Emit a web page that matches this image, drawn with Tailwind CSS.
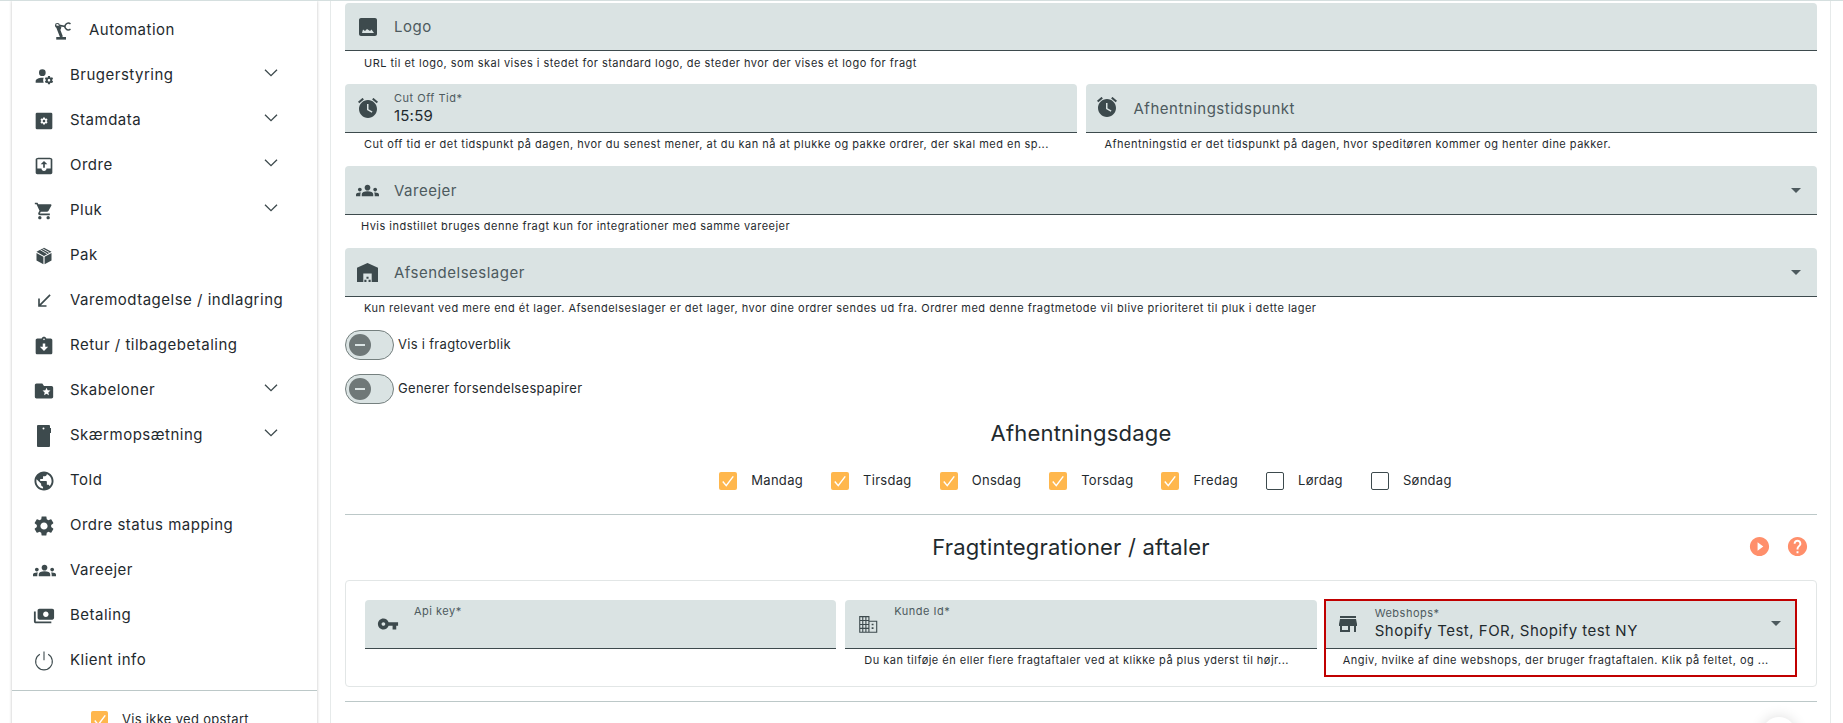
<!DOCTYPE html>
<html lang="en">

<head>
    <meta charset="UTF-8">
    <meta name="viewport" content="width=device-width, initial-scale=1.0">
    <title>Fragt</title>
    <script src="https://cdn.jsdelivr.net/npm/@tailwindcss/browser@4"></script>
</head>

<body class="h-[723px] overflow-hidden bg-white font-['Inter',sans-serif] text-[#1f2a2e]">

    <div class="h-[723px] border-t border-[#d5dfdf] flex overflow-hidden">

        <!-- Sidebar -->
        <aside class="w-[305px] ml-3 shrink-0 h-[760px] shadow-[0_0_3px_rgba(0,0,0,0.25)] text-[15px] tracking-[0.5px]">
            <div class="pt-[7px] text-[#1f2a2e]">
                <a class="h-[45px] flex items-center pl-[42px] gap-[17px]">
                    <svg class="w-[18px] h-[18px] fill-[#3d4a4d] stroke-[#3d4a4d]" viewBox="0 0 24 24"><rect x="3" y="20" width="13" height="3.500" stroke="none"/><path d="M10 20 5 7 9.500 8" stroke-width="4" fill="none"/><circle cx="4.500" cy="4.500" r="2.500" stroke-width="1.500" fill="none"/><path d="M7 4.500 15 6" stroke-width="2.200"/><path d="M22 2.500A4.500 4.500 0 1 0 22 9.500" fill="none" stroke-width="2"/></svg>
                    <span>Automation</span>
                </a>
                <a class="h-[45px] flex items-center pl-[22px] gap-[16px]">
                    <svg class="w-[20px] h-[20px] fill-[#3d4a4d]" viewBox="0 0 24 24"><path d="M10 4A4 4 0 0 0 6 8A4 4 0 0 0 10 12A4 4 0 0 0 14 8A4 4 0 0 0 10 4M17 12C16.87 12 16.76 12.09 16.74 12.21L16.55 13.53C16.25 13.66 15.96 13.82 15.7 14L14.46 13.5C14.35 13.5 14.22 13.5 14.15 13.63L13.15 15.36C13.09 15.47 13.11 15.6 13.21 15.68L14.27 16.5C14.25 16.67 14.24 16.83 14.24 17C14.24 17.17 14.25 17.33 14.27 17.5L13.21 18.32C13.12 18.4 13.09 18.53 13.15 18.64L14.15 20.37C14.21 20.5 14.34 20.5 14.46 20.5L15.7 20C15.96 20.18 16.24 20.35 16.55 20.47L16.74 21.79C16.76 21.91 16.86 22 17 22H19C19.11 22 19.22 21.91 19.24 21.79L19.43 20.47C19.73 20.34 20 20.18 20.27 20L21.5 20.5C21.63 20.5 21.76 20.5 21.83 20.37L22.83 18.64C22.89 18.53 22.86 18.4 22.77 18.32L21.7 17.5C21.72 17.33 21.74 17.17 21.74 17C21.74 16.83 21.73 16.67 21.7 16.5L22.76 15.68C22.85 15.6 22.88 15.47 22.82 15.36L21.82 13.63C21.76 13.5 21.63 13.5 21.5 13.5L20.27 14C20 13.82 19.73 13.65 19.42 13.53L19.23 12.21C19.22 12.09 19.11 12 19 12H17M10 14C5.58 14 2 15.79 2 18V20H11.68A7 7 0 0 1 11 17A7 7 0 0 1 11.64 14.09C11.11 14.03 10.56 14 10 14M18 15.5C18.83 15.5 19.5 16.17 19.5 17C19.5 17.83 18.83 18.5 18 18.5C17.16 18.5 16.5 17.83 16.5 17C16.5 16.17 17.17 15.5 18 15.5Z"/></svg>
                    <span class="flex-1">Brugerstyring</span>
                    <svg class="w-[16px] h-[16px] mr-[38px] -mt-[6px] fill-none stroke-[#3d4a4d] stroke-[2]" viewBox="0 0 24 24"><path d="M3 7l9 9 9-9"/></svg>
                </a>
                <a class="h-[45px] flex items-center pl-[22px] gap-[16px]">
                    <svg class="w-[20px] h-[20px]" viewBox="0 0 24 24"><rect x="2" y="2" width="20" height="20" rx="1.500" fill="#3d4a4d"/><path fill="#fff" transform="translate(6.600 6.600) scale(.45)" d="M19.14 12.94c.04-.3.06-.61.06-.94 0-.32-.02-.64-.07-.94l2.03-1.58c.18-.14.23-.41.12-.61l-1.92-3.32c-.12-.22-.37-.29-.59-.22l-2.39.96c-.5-.38-1.03-.7-1.62-.94l-.36-2.54c-.04-.24-.24-.41-.48-.41h-3.84c-.24 0-.43.17-.47.41l-.36 2.54c-.59.24-1.13.57-1.62.94l-2.39-.96c-.22-.08-.47 0-.59.22L2.74 8.87c-.12.21-.08.47.12.61l2.03 1.58c-.05.3-.09.63-.09.94s.02.64.07.94l-2.03 1.58c-.18.14-.23.41-.12.61l1.92 3.32c.12.22.37.29.59.22l2.39-.96c.5.38 1.03.7 1.62.94l.36 2.54c.05.24.24.41.48.41h3.84c.24 0 .44-.17.47-.41l.36-2.54c.59-.24 1.13-.56 1.62-.94l2.39.96c.22.08.47 0 .59-.22l1.92-3.32c.12-.22.07-.47-.12-.61l-2.01-1.58zM12 15.6c-1.98 0-3.6-1.62-3.6-3.6s1.62-3.6 3.6-3.6 3.6 1.62 3.6 3.6-1.62 3.6-3.6 3.6z"/></svg>
                    <span class="flex-1">Stamdata</span>
                    <svg class="w-[16px] h-[16px] mr-[38px] -mt-[6px] fill-none stroke-[#3d4a4d] stroke-[2]" viewBox="0 0 24 24"><path d="M3 7l9 9 9-9"/></svg>
                </a>
                <a class="h-[45px] flex items-center pl-[22px] gap-[16px]">
                    <svg class="w-[20px] h-[20px] fill-[#3d4a4d]" viewBox="0 0 24 24"><path d="M19 2H5c-1.100 0-3 .9-3 2v16c0 1.100 1.900 2 3 2h14c1.100 0 3-.9 3-2V4c0-1.100-1.900-2-3-2zm0 13h-4c0 1.660-1.350 3-3 3s-3-1.340-3-3H4V4h16v11zm-11-5h3v4h2v-4h3l-4-4-4 4z"/></svg>
                    <span class="flex-1">Ordre</span>
                    <svg class="w-[16px] h-[16px] mr-[38px] -mt-[6px] fill-none stroke-[#3d4a4d] stroke-[2]" viewBox="0 0 24 24"><path d="M3 7l9 9 9-9"/></svg>
                </a>
                <a class="h-[45px] flex items-center pl-[22px] gap-[16px]">
                    <svg class="w-[20px] h-[20px] fill-[#3d4a4d]" viewBox="0 0 24 24"><path d="M7 18c-1.100 0-1.990.9-1.990 2S5.900 22 7 22s2-.9 2-2-.9-2-2-2zM1 2v2h2l3.600 7.590-1.350 2.450c-.16.28-.25.61-.25.96 0 1.100.9 2 2 2h12v-2H7.420c-.14 0-.25-.11-.25-.25l.03-.12.9-1.630h7.450c.75 0 1.410-.41 1.750-1.030l3.580-6.490c.08-.14.12-.31.12-.48 0-.55-.45-1-1-1H5.210l-.94-2H1zm16 16c-1.100 0-1.990.9-1.990 2s.89 2 1.990 2 2-.9 2-2-.9-2-2-2z"/></svg>
                    <span class="flex-1">Pluk</span>
                    <svg class="w-[16px] h-[16px] mr-[38px] -mt-[6px] fill-none stroke-[#3d4a4d] stroke-[2]" viewBox="0 0 24 24"><path d="M3 7l9 9 9-9"/></svg>
                </a>
                <a class="h-[45px] flex items-center pl-[22px] gap-[16px]">
                    <svg class="w-[20px] h-[20px] fill-[#3d4a4d]" viewBox="0 0 24 24"><path d="M12 2 21 7 12 12 3 7zM3 8.500 11.300 13V22L3 17.500zM12.700 13 21 8.500V17.500L12.700 22z"/><path d="M7.500 4.500 16 9.500M10 3.200 18.500 8" stroke="#fff" stroke-width="1"/></svg>
                    <span>Pak</span>
                </a>
                <a class="h-[45px] flex items-center pl-[22px] gap-[16px]">
                    <svg class="w-[20px] h-[20px] fill-[#3d4a4d]" viewBox="0 0 24 24"><path d="M20 5.410 18.590 4 7 15.590V9H5v10h10v-2H8.410z"/></svg>
                    <span>Varemodtagelse / indlagring</span>
                </a>
                <a class="h-[45px] flex items-center pl-[22px] gap-[16px]">
                    <svg class="w-[20px] h-[20px] fill-[#3d4a4d]" viewBox="0 0 24 24"><path d="M20 3h-5.180C14.400 1.840 13.300 1 12 1c-1.300 0-2.400.84-2.820 2H4c-1.100 0-2 .9-2 2v15c0 1.100.9 2 2 2h16c1.100 0 2-.9 2-2V5c0-1.100-.9-2-2-2zm-8 0c.55 0 1 .45 1 1s-.45 1-1 1-1-.45-1-1 .45-1 1-1zm0 15l-5-5h3.500V9h3v4H17l-5 5z"/></svg>
                    <span>Retur / tilbagebetaling</span>
                </a>
                <a class="h-[45px] flex items-center pl-[22px] gap-[16px]">
                    <svg class="w-[20px] h-[20px] fill-[#3d4a4d]" viewBox="0 0 24 24"><path d="M21 6h-9l-2-3H3c-1.100 0-2 .9-2 2v14c0 1.100.9 2 2 2h18c1.100 0 2-.9 2-2V8c0-1.100-.9-2-2-2zm-3.060 11L15 15.280 12.060 17l.78-3.330-2.590-2.240 3.410-.29L15 8l1.340 3.140 3.410.29-2.590 2.240.78 3.330z"/></svg>
                    <span class="flex-1">Skabeloner</span>
                    <svg class="w-[16px] h-[16px] mr-[38px] -mt-[6px] fill-none stroke-[#3d4a4d] stroke-[2]" viewBox="0 0 24 24"><path d="M3 7l9 9 9-9"/></svg>
                </a>
                <a class="h-[45px] flex items-center pl-[22px] gap-[16px]">
                    <svg class="w-[20px] h-[22px] fill-[#3d4a4d]" viewBox="0 0 20 22"><rect x="3" y="0" width="13" height="22" rx="1"/><rect x="16" y="3" width="1" height="5"/><circle cx="9.500" cy="3.500" r="1" fill="#fff"/></svg>
                    <span class="flex-1">Skærmopsætning</span>
                    <svg class="w-[16px] h-[16px] mr-[38px] -mt-[6px] fill-none stroke-[#3d4a4d] stroke-[2]" viewBox="0 0 24 24"><path d="M3 7l9 9 9-9"/></svg>
                </a>
                <a class="h-[45px] flex items-center pl-[22px] gap-[16px]">
                    <svg class="w-[20px] h-[20px] fill-[#3d4a4d]" viewBox="1.500 1.500 21 21"><path d="M12 2C6.480 2 2 6.480 2 12s4.480 10 10 10 10-4.480 10-10S17.520 2 12 2zm-1 17.930c-3.950-.49-7-3.850-7-7.930 0-.62.08-1.210.21-1.790L9 15v1c0 1.100.9 2 2 2v1.930zm6.900-2.540c-.26-.81-1-1.390-1.900-1.390h-1v-3c0-.55-.45-1-1-1H8v-2h2c.55 0 1-.45 1-1V7h2c1.100 0 2-.9 2-2v-.41c2.930 1.190 5 4.060 5 7.410 0 2.080-.8 3.970-2.100 5.390z"/></svg>
                    <span>Told</span>
                </a>
                <a class="h-[45px] flex items-center pl-[22px] gap-[16px]">
                    <svg class="w-[20px] h-[20px] fill-[#3d4a4d]" viewBox="2 2 20 20"><path d="M19.140 12.940c.04-.3.06-.61.06-.94 0-.32-.02-.64-.07-.94l2.030-1.580c.18-.14.23-.41.12-.61l-1.920-3.320c-.12-.22-.37-.29-.59-.22l-2.390.96c-.5-.38-1.030-.7-1.620-.94l-.36-2.540c-.04-.24-.24-.41-.48-.41h-3.840c-.24 0-.43.17-.47.41l-.36 2.540c-.59.24-1.130.57-1.620.94l-2.390-.96c-.22-.08-.47 0-.59.22L2.740 8.870c-.12.21-.08.47.12.61l2.030 1.580c-.05.3-.09.63-.09.94s.02.64.07.94l-2.030 1.580c-.18.14-.23.41-.12.61l1.920 3.320c.12.22.37.29.59.22l2.390-.96c.5.38 1.030.7 1.620.94l.36 2.540c.05.24.24.41.48.41h3.840c.24 0 .44-.17.47-.41l.36-2.540c.59-.24 1.130-.56 1.620-.94l2.390.96c.22.08.47 0 .59-.22l1.920-3.320c.12-.22.07-.47-.12-.61l-2.010-1.580zM12 15.600c-1.980 0-3.600-1.620-3.600-3.600s1.620-3.600 3.600-3.600 3.600 1.620 3.600 3.600-1.620 3.600-3.600 3.600z"/></svg>
                    <span>Ordre status mapping</span>
                </a>
                <a class="h-[45px] flex items-center pl-[22px] gap-[16px]">
                    <svg class="w-[23px] h-[23px] -mx-[1.500px] fill-[#3d4a4d]" viewBox="0 0 24 24"><path d="M12 12.750c1.630 0 3.070.39 4.240.9 1.080.48 1.760 1.560 1.760 2.730V18H6v-1.610c0-1.180.68-2.260 1.760-2.730 1.170-.52 2.610-.91 4.240-.91zM4 13c1.100 0 2-.9 2-2s-.9-2-2-2-2 .9-2 2 .9 2 2 2zm1.130 1.100c-.37-.06-.74-.1-1.130-.1-.99 0-1.930.21-2.780.58C.48 14.900 0 15.620 0 16.430V18h4.500v-1.610c0-.83.23-1.610.63-2.290zM20 13c1.100 0 2-.9 2-2s-.9-2-2-2-2 .9-2 2 .9 2 2 2zm4 3.430c0-.81-.48-1.530-1.220-1.850-.85-.37-1.790-.58-2.780-.58-.39 0-.76.04-1.130.1.4.68.63 1.460.63 2.290V18H24v-1.570zM12 6c1.660 0 3 1.340 3 3s-1.340 3-3 3-3-1.340-3-3 1.340-3 3-3z"/></svg>
                    <span>Vareejer</span>
                </a>
                <a class="h-[45px] flex items-center pl-[22px] gap-[16px]">
                    <svg class="w-[22px] h-[22px] -mx-[1px] fill-[#3d4a4d] -scale-x-100" viewBox="0 0 24 24"><path d="M19 14V6c0-1.100-.9-2-2-2H3c-1.100 0-2 .9-2 2v8c0 1.100.9 2 2 2h14c1.100 0 2-.9 2-2zm-9-1c-1.660 0-3-1.340-3-3s1.340-3 3-3 3 1.340 3 3-1.340 3-3 3zm13-6v11c0 1.100-.9 2-2 2H4v-2h17V7h2z"/></svg>
                    <span>Betaling</span>
                </a>
                <a class="h-[45px] flex items-center pl-[22px] gap-[16px]">
                    <svg class="w-[20px] h-[20px] fill-none stroke-[#3d4a4d] stroke-[1.300]" viewBox="0 0 24 24"><path d="M7 4A10 10 0 1 0 17 4M12 0.500V11"/></svg>
                    <span>Klient info</span>
                </a>
            </div>
            <div class="mt-[7px] border-t border-[#bcc8c8] pt-[20px] pl-[79px] flex items-start gap-[14px] text-[13px] tracking-[0.3px]">
                <span class="w-[17px] h-[17px] rounded-[2px] bg-[#ffb74d] flex items-center justify-center">
                    <svg class="w-[14px] h-[14px] fill-none stroke-white stroke-[2.500]" viewBox="0 0 24 24"><path d="M3 13l6 7L21 4"/></svg>
                </span>
                <span class="-mt-[1px]">Vis ikke ved opstart</span>
            </div>
        </aside>

        <!-- Main form -->
        <main class="relative ml-[13px] w-[1501px] h-[760px] shrink-0 border-x border-[#e6eaea] pl-[14px] pr-[13px] pt-[2px]">

            <div class="h-[48px] bg-[#dae3e3] rounded-t-[4px] border-b border-[#3d4a4d] flex items-center pl-[14px] gap-[17px]">
                <svg class="w-[18px] h-[18px] fill-[#3d4a4d]" viewBox="3 3 18 18"><path d="M21 19V5c0-1.100-.9-2-2-2H5c-1.100 0-2 .9-2 2v14c0 1.100.9 2 2 2h14c1.100 0 2-.9 2-2zM7 14.500l2 1.500 2-2 3 2 1.500-1.500 2.500 3.500H6z"/></svg>
                <span class="pt-[2px] text-[15px] tracking-[0.5px] text-[#4d5a5e]">Logo</span>
            </div>
            <p class="h-[33px] pl-[19px] pt-[4px] text-[11px] leading-[16px] tracking-[0.48px]">URL til et logo, som skal vises i stedet for standard logo, de steder hvor der vises et logo for fragt</p>

            <div class="flex gap-[9px]">
                <div class="flex-1">
                    <div class="h-[49px] bg-[#dae3e3] rounded-t-[4px] border-b border-[#3d4a4d] flex items-center pl-[13px] gap-[16px]">
                        <svg class="w-[20px] h-[20px]" viewBox="2 2 20 20"><path fill="#3d4a4d" d="M22 5.720l-4.600-3.860-1.290 1.530 4.600 3.860L22 5.720zM7.880 3.390 6.600 1.860 2 5.710l1.290 1.530 4.590-3.850zM12 4c-4.970 0-9 4.030-9 9s4.020 9 9 9c4.970 0 9-4.030 9-9s-4.030-9-9-9z"/><path fill="#dae3e3" d="M12.500 8H11v6l4.750 2.850.75-1.230-4-2.370V8z"/></svg>
                        <div class="flex flex-col pt-[1px]">
                            <span class="text-[11px] leading-[14px] tracking-[0.5px] text-[#4d5a5e]">Cut Off Tid*</span>
                            <span class="text-[15px] leading-[22px] tracking-[0.2px]">15:59</span>
                        </div>
                    </div>
                    <p class="h-[33px] pl-[19px] pt-[3px] text-[11px] leading-[16px] tracking-[0.48px]">Cut off tid er det tidspunkt på dagen, hvor du senest mener, at du kan nå at plukke og pakke ordrer, der skal med en sp...</p>
                </div>
                <div class="flex-1">
                    <div class="h-[49px] bg-[#dae3e3] rounded-t-[4px] border-b border-[#3d4a4d] flex items-center pl-[11px] gap-[17px]">
                        <svg class="w-[20px] h-[20px] -mt-[3px]" viewBox="2 2 20 20"><path fill="#3d4a4d" d="M22 5.720l-4.600-3.860-1.290 1.530 4.600 3.860L22 5.720zM7.880 3.390 6.600 1.860 2 5.710l1.290 1.530 4.590-3.850zM12 4c-4.970 0-9 4.030-9 9s4.020 9 9 9c4.970 0 9-4.030 9-9s-4.030-9-9-9z"/><path fill="#dae3e3" d="M12.500 8H11v6l4.750 2.850.75-1.230-4-2.370V8z"/></svg>
                        <span class="pt-[3px] text-[15px] tracking-[0.5px] text-[#4d5a5e]">Afhentningstidspunkt</span>
                    </div>
                    <p class="h-[33px] pl-[19px] pt-[3px] text-[11px] leading-[16px] tracking-[0.48px]">Afhentningstid er det tidspunkt på dagen, hvor speditøren kommer og henter dine pakker.</p>
                </div>
            </div>

            <div class="h-[49px] bg-[#dae3e3] rounded-t-[4px] border-b border-[#3d4a4d] flex items-center pl-[11px] gap-[15px]">
                <svg class="w-[23px] h-[23px] fill-[#3d4a4d]" viewBox="0 0 24 24"><path d="M12 12.750c1.630 0 3.070.39 4.240.9 1.080.48 1.760 1.560 1.760 2.730V18H6v-1.610c0-1.180.68-2.260 1.760-2.730 1.170-.52 2.610-.91 4.240-.91zM4 13c1.100 0 2-.9 2-2s-.9-2-2-2-2 .9-2 2 .9 2 2 2zm1.130 1.100c-.37-.06-.74-.1-1.130-.1-.99 0-1.930.21-2.780.58C.48 14.900 0 15.620 0 16.430V18h4.500v-1.610c0-.83.23-1.610.63-2.290zM20 13c1.100 0 2-.9 2-2s-.9-2-2-2-2 .9-2 2 .9 2 2 2zm4 3.430c0-.81-.48-1.530-1.220-1.850-.85-.37-1.790-.58-2.780-.58-.39 0-.76.04-1.130.1.4.68.63 1.460.63 2.290V18H24v-1.570zM12 6c1.660 0 3 1.340 3 3s-1.340 3-3 3-3-1.340-3-3 1.340-3 3-3z"/></svg>
                <span class="flex-1 pt-[2px] text-[15px] tracking-[0.5px] text-[#4d5a5e]">Vareejer</span>
                <span class="mr-[16px] border-x-[5px] border-t-[5px] border-x-transparent border-t-[#4d5a5e]"></span>
            </div>
            <p class="h-[33px] pl-[16px] pt-[3px] text-[11px] leading-[16px] tracking-[0.48px]">Hvis indstillet bruges denne fragt kun for integrationer med samme vareejer</p>

            <div class="h-[49px] bg-[#dae3e3] rounded-t-[4px] border-b border-[#3d4a4d] flex items-center pl-[12px] gap-[16px]">
                <svg class="w-[21px] h-[21px] fill-[#3d4a4d]" viewBox="2 2 20 20"><path d="M22 21V7.500L12 3 2 7.500V21h6v-8h8v8h6zm-11-2H9v2h2v-2zm2-3h-2v2h2v-2zm2 3h-2v2h2v-2z"/></svg>
                <span class="flex-1 pt-[2px] text-[15px] tracking-[0.5px] text-[#4d5a5e]">Afsendelseslager</span>
                <span class="mr-[16px] border-x-[5px] border-t-[5px] border-x-transparent border-t-[#4d5a5e]"></span>
            </div>
            <p class="h-[33px] pl-[19px] pt-[3px] text-[11px] leading-[16px] tracking-[0.48px]">Kun relevant ved mere end ét lager. Afsendelseslager er det lager, hvor dine ordrer sendes ud fra. Ordrer med denne fragtmetode vil blive prioriteret til pluk i dette lager</p>

            <div class="flex items-center gap-[4px] h-[30px] text-[13px] tracking-[0.3px]">
                <span class="w-[49px] h-[30px] rounded-full bg-[#dae3e3] border border-[#75807f] flex items-center pl-[3px]">
                    <span class="w-[22px] h-[22px] rounded-full bg-[#6f7878] flex items-center justify-center"><span class="w-[10px] h-[1.500px] bg-[#dae3e3]"></span></span>
                </span>
                <span>Vis i fragtoverblik</span>
            </div>
            <div class="flex items-center gap-[4px] h-[30px] mt-[14px] text-[13px] tracking-[0.3px]">
                <span class="w-[49px] h-[30px] rounded-full bg-[#dae3e3] border border-[#75807f] flex items-center pl-[3px]">
                    <span class="w-[22px] h-[22px] rounded-full bg-[#6f7878] flex items-center justify-center"><span class="w-[10px] h-[1.500px] bg-[#dae3e3]"></span></span>
                </span>
                <span>Generer forsendelsespapirer</span>
            </div>

            <h2 class="mt-[14px] h-[30px] text-center text-[22px] leading-[30px] tracking-[0.2px]">Afhentningsdage</h2>

            <div class="mt-[23px] h-[20px] pl-[9px] flex items-center justify-center gap-[28px] text-[13px] tracking-[0.3px]">
                <label class="flex items-center gap-[14px]"><span class="w-[18px] h-[18px] rounded-[2px] bg-[#ffb74d] flex items-center justify-center"><svg class="w-[14px] h-[14px] fill-none stroke-white stroke-[2.500]" viewBox="0 0 24 24"><path d="M3 13l6 7L21 4"/></svg></span>Mandag</label>
                <label class="flex items-center gap-[14px]"><span class="w-[18px] h-[18px] rounded-[2px] bg-[#ffb74d] flex items-center justify-center"><svg class="w-[14px] h-[14px] fill-none stroke-white stroke-[2.500]" viewBox="0 0 24 24"><path d="M3 13l6 7L21 4"/></svg></span>Tirsdag</label>
                <label class="flex items-center gap-[14px]"><span class="w-[18px] h-[18px] rounded-[2px] bg-[#ffb74d] flex items-center justify-center"><svg class="w-[14px] h-[14px] fill-none stroke-white stroke-[2.500]" viewBox="0 0 24 24"><path d="M3 13l6 7L21 4"/></svg></span>Onsdag</label>
                <label class="flex items-center gap-[14px]"><span class="w-[18px] h-[18px] rounded-[2px] bg-[#ffb74d] flex items-center justify-center"><svg class="w-[14px] h-[14px] fill-none stroke-white stroke-[2.500]" viewBox="0 0 24 24"><path d="M3 13l6 7L21 4"/></svg></span>Torsdag</label>
                <label class="flex items-center gap-[14px]"><span class="w-[18px] h-[18px] rounded-[2px] bg-[#ffb74d] flex items-center justify-center"><svg class="w-[14px] h-[14px] fill-none stroke-white stroke-[2.500]" viewBox="0 0 24 24"><path d="M3 13l6 7L21 4"/></svg></span>Fredag</label>
                <label class="flex items-center gap-[14px]"><span class="w-[18px] h-[18px] rounded-[2px] border-[1.500px] border-[#3d4a4d]"></span>Lørdag</label>
                <label class="flex items-center gap-[14px]"><span class="w-[18px] h-[18px] rounded-[2px] border-[1.500px] border-[#3d4a4d]"></span>Søndag</label>
            </div>

            <hr class="mt-[23px] border-[#bcc8c8]">

            <div class="mt-[15px] h-[34px] flex items-center justify-center pr-[20px] relative">
                <h2 class="text-[22px] leading-[34px] tracking-[0.2px]">Fragtintegrationer / aftaler</h2>
                <svg class="absolute right-[46px] top-[5px] w-[23px] h-[23px] fill-[#ff8f6b]" viewBox="0 0 24 24"><path d="M12 2C6.480 2 2 6.480 2 12s4.480 10 10 10 10-4.480 10-10S17.520 2 12 2zm-2 14.500v-9l6 4.500-6 4.500z"/></svg>
                <svg class="absolute right-[8px] top-[5px] w-[23px] h-[23px] fill-[#ff8f6b]" viewBox="0 0 24 24"><path d="M12 2C6.480 2 2 6.480 2 12s4.480 10 10 10 10-4.480 10-10S17.520 2 12 2zm1 17h-2v-2h2v2zm2.070-7.750-.9.92C13.450 12.900 13 13.500 13 15h-2v-.5c0-1.100.45-2.100 1.170-2.830l1.240-1.260c.37-.36.59-.86.59-1.410 0-1.100-.9-2-2-2s-2 .9-2 2H8c0-2.210 1.790-4 4-4s4 1.790 4 4c0 .88-.36 1.680-.93 2.250z"/></svg>
            </div>

            <div class="mt-[16px] h-[107px] border border-[#e2e6e6] rounded-[4px] px-[19px] pt-[19px] grid grid-cols-3 gap-x-[9px] items-start">
                <div>
                    <div class="h-[49px] bg-[#dae3e3] rounded-t-[4px] border-b border-[#3d4a4d] flex pl-[12px] gap-[15px]">
                        <svg class="w-[22px] h-[22px] mt-[13px] fill-[#3d4a4d]" viewBox="0 0 24 24"><path d="M12.650 10C11.830 7.670 9.610 6 7 6c-3.310 0-6 2.690-6 6s2.690 6 6 6c2.610 0 4.830-1.670 5.650-4H17v4h4v-4h2v-4H12.650zM7 14c-1.100 0-2-.9-2-2s.9-2 2-2 2 .9 2 2-.9 2-2 2z"/></svg>
                        <span class="pt-[4px] text-[11px] leading-[14px] tracking-[0.5px] text-[#4d5a5e]">Api key*</span>
                    </div>
                </div>
                <div>
                    <div class="h-[49px] bg-[#dae3e3] rounded-t-[4px] border-b border-[#3d4a4d] flex pl-[12px] gap-[15px]">
                        <svg class="w-[22px] h-[22px] mt-[13px] fill-none stroke-[#3d4a4d] stroke-[1.200]" viewBox="0 0 24 24"><path d="M3 4H13V21H3zM6.300 4V21M9.700 4V21M3 8.200H13M3 12.500H13M3 16.800H13M13 9H21.500V21H13"/><path d="M16 12.500H18M16 16.500H18" stroke-width="1.800"/></svg>
                        <span class="pt-[4px] text-[11px] leading-[14px] tracking-[0.5px] text-[#4d5a5e]">Kunde Id*</span>
                    </div>
                    <p class="pl-[19px] pt-[3px] text-[11px] leading-[16px] tracking-[0.48px]">Du kan tilføje én eller flere fragtaftaler ved at klikke på plus yderst til højr...</p>
                </div>
                <div class="h-[78px] -ml-[2px] -mt-[1px] outline-2 outline-[#c00000] -outline-offset-2">
                    <div class="h-[50px] bg-[#dae3e3] border-b border-[#3d4a4d] flex items-center pl-[14px] gap-[17px]">
                        <svg class="w-[20px] h-[20px] fill-[#3d4a4d]" viewBox="2 2 20 20"><path d="M20 4H4v2h16V4zm1 10v-2l-1-5H4l-1 5v2h1v6h10v-6h4v6h2v-6h1zm-9 4H6v-4h6v4z"/></svg>
                        <div class="flex-1 flex flex-col">
                            <span class="text-[11px] leading-[14px] tracking-[0.5px] text-[#4d5a5e]">Webshops*</span>
                            <span class="text-[15px] leading-[22px] tracking-[0.5px]">Shopify Test, FOR, Shopify test NY</span>
                        </div>
                        <span class="mr-[16px] border-x-[5px] border-t-[5px] border-x-transparent border-t-[#4d5a5e]"></span>
                    </div>
                    <p class="pl-[19px] pt-[3px] text-[11px] leading-[16px] tracking-[0.48px]">Angiv, hvilke af dine webshops, der bruger fragtaftalen. Klik på feltet, og ...</p>
                </div>
            </div>

            <hr class="mt-[14px] border-[#bcc8c8]">

            <!-- floating button, mostly below the fold -->
            <div class="absolute left-[1431px] top-[716px] w-[34px] h-[34px] rounded-full bg-white shadow-[0_0_14px_rgba(0,0,0,0.14)]"></div>
        </main>
    </div>

</body>

</html>
